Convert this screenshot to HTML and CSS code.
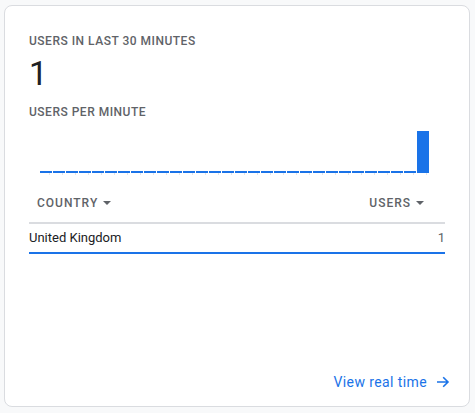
FILE: index.html
```html
<!DOCTYPE html>
<html lang="en">
<head>
<meta charset="utf-8">
<title>Realtime users</title>
<link rel="stylesheet" href="styles.css">
</head>
<body>
<div class="card">
  <div class="label">Users in last 30 minutes</div>
  <div class="big">1</div>
  <div class="label sub">Users per minute</div>
  <div class="chart">
    <div class="col"><div class="bar"></div><div class="tick"></div></div>
    <div class="col"><div class="bar"></div><div class="tick"></div></div>
    <div class="col"><div class="bar"></div><div class="tick"></div></div>
    <div class="col"><div class="bar"></div><div class="tick"></div></div>
    <div class="col"><div class="bar"></div><div class="tick"></div></div>
    <div class="col"><div class="bar"></div><div class="tick"></div></div>
    <div class="col"><div class="bar"></div><div class="tick"></div></div>
    <div class="col"><div class="bar"></div><div class="tick"></div></div>
    <div class="col"><div class="bar"></div><div class="tick"></div></div>
    <div class="col"><div class="bar"></div><div class="tick"></div></div>
    <div class="col"><div class="bar"></div><div class="tick"></div></div>
    <div class="col"><div class="bar"></div><div class="tick"></div></div>
    <div class="col"><div class="bar"></div><div class="tick"></div></div>
    <div class="col"><div class="bar"></div><div class="tick"></div></div>
    <div class="col"><div class="bar"></div><div class="tick"></div></div>
    <div class="col"><div class="bar"></div><div class="tick"></div></div>
    <div class="col"><div class="bar"></div><div class="tick"></div></div>
    <div class="col"><div class="bar"></div><div class="tick"></div></div>
    <div class="col"><div class="bar"></div><div class="tick"></div></div>
    <div class="col"><div class="bar"></div><div class="tick"></div></div>
    <div class="col"><div class="bar"></div><div class="tick"></div></div>
    <div class="col"><div class="bar"></div><div class="tick"></div></div>
    <div class="col"><div class="bar"></div><div class="tick"></div></div>
    <div class="col"><div class="bar"></div><div class="tick"></div></div>
    <div class="col"><div class="bar"></div><div class="tick"></div></div>
    <div class="col"><div class="bar"></div><div class="tick"></div></div>
    <div class="col"><div class="bar"></div><div class="tick"></div></div>
    <div class="col"><div class="bar"></div><div class="tick"></div></div>
    <div class="col"><div class="bar"></div><div class="tick"></div></div>
    <div class="col"><div class="bar full"></div><div class="tick"></div></div>
  </div>
  <div class="thead">
    <div class="th">Country<span class="caret"></span></div>
    <div class="th">Users<span class="caret"></span></div>
  </div>
  <div class="row">
    <div class="cell">United Kingdom</div>
    <div class="cell num">1</div>
  </div>
  <div class="footer">
    <a class="link" href="#">View real time
      <svg class="arrow" width="14" height="12" viewBox="0 0 14 12" aria-hidden="true"><path d="M1 6h11.2M7.2 1.2L12 6l-4.8 4.8" fill="none" stroke="#1a73e8" stroke-width="1.6"/></svg>
    </a>
  </div>
</div>
</body>
</html>
```
FILE: styles.css
```css
html, body {
  margin: 0;
  padding: 0;
  background: #f8f9fa;
  font-family: Roboto, "Liberation Sans", Arial, sans-serif;
}
.card {
  box-sizing: border-box;
  width: 466px;
  height: 402px;
  margin: 5px 0 0 4px;
  background: #fff;
  border: 1px solid #dadce0;
  border-radius: 8px;
  padding: 27px 24px 14px 24px;
  display: flex;
  flex-direction: column;
}
.label {
  font-size: 12px;
  font-weight: 500;
  line-height: 16px;
  letter-spacing: 0.5px;
  text-transform: uppercase;
  color: #5f6368;
}
.big {
  margin-top: 5px;
  font-size: 33px;
  line-height: 40px;
  font-weight: 400;
  color: #202124;
}
.sub {
  margin-top: 10px;
}
.chart {
  display: flex;
  align-items: flex-end;
  gap: 1px;
  height: 55px;
  padding-left: 11px;
}
.col {
  width: 12px;
  display: flex;
  flex-direction: column;
  justify-content: flex-end;
}
.bar {
  height: 2px;
  background: #1a73e8;
}
.bar.full {
  height: 42px;
}
.tick {
  width: 1px;
  height: 2px;
  margin-left: 9px;
  background: #e3e5e8;
}
.thead {
  margin-top: 20px;
  display: flex;
  justify-content: space-between;
  padding: 0 21px 11px 8px;
  border-bottom: 2px solid #dadce0;
}
.th {
  display: flex;
  align-items: center;
  font-size: 12px;
  font-weight: 500;
  line-height: 16px;
  letter-spacing: 1px;
  text-transform: uppercase;
  color: #5f6368;
}
.caret {
  width: 0;
  height: 0;
  margin-left: 5px;
  border-left: 4px solid transparent;
  border-right: 4px solid transparent;
  border-top: 4px solid #5f6368;
}
.row {
  display: flex;
  justify-content: space-between;
  padding: 4px 0;
  border-bottom: 2px solid #1a73e8;
}
.cell {
  font-size: 13px;
  line-height: 20px;
  color: #202124;
}
.cell.num {
  color: #5f6368;
}
.footer {
  margin-top: auto;
  margin-right: -5px;
  display: flex;
  justify-content: flex-end;
}
.link {
  display: flex;
  align-items: center;
  gap: 9px;
  font-size: 14px;
  font-weight: 400;
  line-height: 20px;
  letter-spacing: 0.4px;
  color: #1a73e8;
  text-decoration: none;
}
.arrow {
  display: block;
}
```
